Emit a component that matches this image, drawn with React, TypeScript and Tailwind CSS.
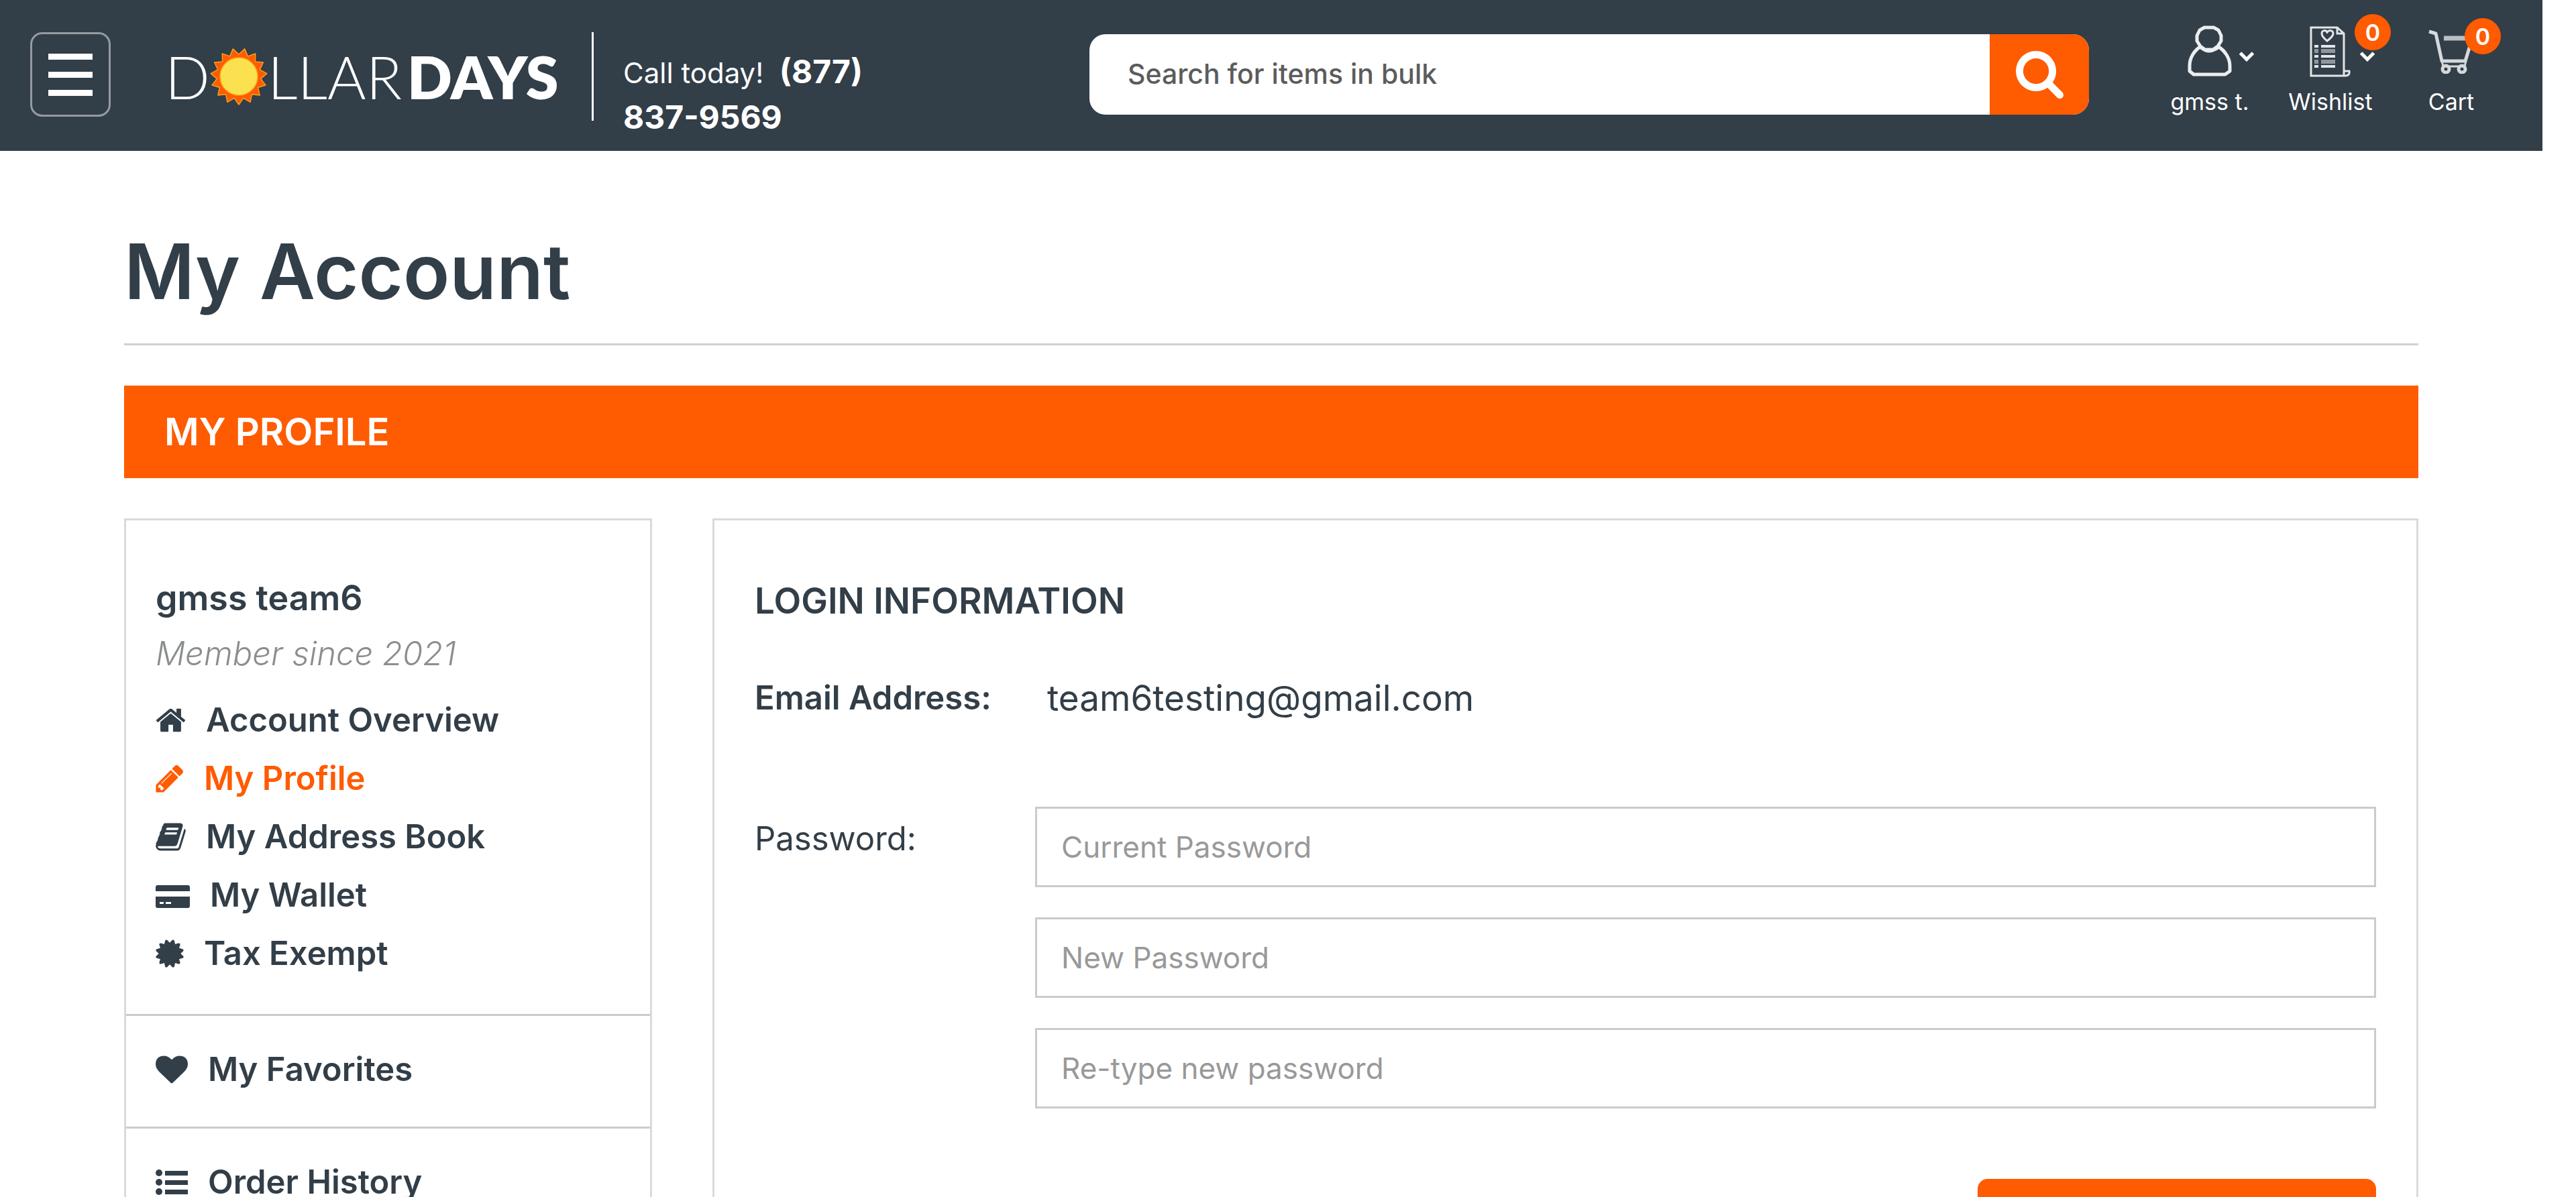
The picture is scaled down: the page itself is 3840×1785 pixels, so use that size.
import type { ReactNode } from "react";

const HOME =
  "M1408 992v480q0 26-19 45t-45 19h-384v-384h-256v384h-384q-26 0-45-19t-19-45v-480q0-1 .5-3t.5-3l575-474 575 474q1 2 1 6zm223-69l-62 74q-8 9-21 11h-3q-13 0-21-7l-692-577-692 577q-12 8-24 7-13-2-21-11l-62-74q-8-10-7-23.5t11-21.5l719-599q32-26 76-26t76 26l244 204v-195q0-14 9-23t23-9h192q14 0 23 9t9 23v408l219 182q10 8 11 21.5t-7 23.5z";
const PENCIL =
  "M491 1536l91-91-235-235-91 91v107h128v128h107zm523-928q0-22-22-22-10 0-17 7l-542 542q-7 7-7 17 0 22 22 22 10 0 17-7l542-542q7-7 7-17zm-54-192l416 416-832 832h-416v-416zm683 96q0 53-37 90l-166 166-416-416 166-165q36-38 90-38 53 0 91 38l235 234q37 39 37 91z";
const BOOK =
  "M1703 478q40 57 18 129l-275 906q-19 64-76.5 107.5t-122.5 43.5h-923q-77 0-148.5-53.5t-99.5-131.5q-24-67-2-127 0-4 3-27t4-37q1-8-3-21.5t-3-19.5q2-11 8-21t16.5-23.5 16.5-23.5q23-38 45-91.5t30-91.5q3-10 .5-30t-.5-28q3-11 17-28t17-23q21-36 42-92t25-90q1-9-2.5-32t.5-28q4-13 22-30.5t22-22.5q19-26 42.5-84.5t27.5-96.5q1-8-3-25.5t-2-26.5q2-8 9-18t18-23 17-21q8-12 16.5-30.5t15-35 16-36 19.5-32 26.5-23.5 36-11.5 47.5 5.5l-1 3q38-9 51-9h761q74 0 114 56t18 130l-274 906q-36 119-71.5 153.5t-128.5 34.5h-869q-27 0-38 15-11 16-1 43 24 70 144 70h923q29 0 56-15.5t35-41.5l300-987q7-22 5-57 38 15 59 43zm-1064 2q-4 13 2 22.5t20 9.5h608q13 0 25.5-9.5t16.5-22.5l21-64q4-13-2-22.5t-20-9.5h-608q-13 0-25.5 9.5t-16.5 22.5zm-83 256q-4 13 2 22.5t20 9.5h608q13 0 25.5-9.5t16.5-22.5l21-64q4-13-2-22.5t-20-9.5h-608q-13 0-25.5 9.5t-16.5 22.5z";
const SEAL =
  "M1504 896l138 135q30 28 20 70-12 41-52 51l-188 48 53 186q12 41-19 70-29 31-70 19l-186-53-48 188q-10 40-51 52-12 2-19 2-31 0-51-22l-135-138-135 138q-28 30-70 20-41-11-51-52l-48-188-186 53q-41 12-70-19-31-29-19-70l53-186-188-48q-40-10-52-51-10-42 20-70l138-135-138-135q-30-28-20-70 12-41 52-51l188-48-53-186q-12-41 19-70 29-31 70-19l186 53 48-188q10-41 51-51 41-12 70 19l135 139 135-139q29-30 70-19 41 10 51 51l48 188 186-53q41-12 70 19 31 29 19 70l-53 186 188 48q40 10 52 51 10 42-20 70z";
const HEART =
  "M896 1664q-26 0-44-18l-624-602q-10-8-27.5-26t-55.5-65.5-68-97.5-53.5-121-23.5-138q0-220 127-344t351-124q62 0 126.5 21.5t120 58 95.5 68.5 76 68q36-36 76-68t95.5-68.5 120-58 126.5-21.5q224 0 351 124t127 344q0 221-229 450l-623 600q-18 18-44 18z";
const SEARCH =
  "M1216 832q0-185-131.5-316.5t-316.5-131.5-316.5 131.5-131.5 316.5 131.5 316.5 316.5 131.5 316.5-131.5 131.5-316.5zm512 832q0 52-38 90t-90 38q-54 0-90-38l-343-342q-179 124-399 124-143 0-273.5-55.5t-225-150-150-225-55.5-273.5 55.5-273.5 150-225 225-150 273.5-55.5 273.5 55.5 225 150 150 225 55.5 273.5q0 220-124 399l343 343q37 37 37 90z";

const SUN_POINTS = Array.from({ length: 30 }, (_, i) => {
  const radius = i % 2 === 0 ? 42 : 33;
  const angle = Math.PI / 2 + (i * Math.PI) / 15;
  return `${(43 + radius * Math.cos(angle)).toFixed(1)},${(43 + radius * Math.sin(angle)).toFixed(1)}`;
}).join(" ");

function SunIcon() {
  return (
    <svg viewBox="0 0 86 86" className="size-[86px]" aria-hidden="true">
      <polygon points={SUN_POINTS} fill="#ff5b00" stroke="#f0a020" strokeWidth="1.5" strokeLinejoin="round" />
      <circle cx="43" cy="43" r="28" fill="#fbe150" stroke="#fba91c" strokeWidth="1.5" />
    </svg>
  );
}

function Chevron() {
  return (
    <svg viewBox="0 0 24 16" className="absolute top-[76px] left-[133px] h-4 w-6" fill="none" stroke="#fff" strokeWidth="5" aria-hidden="true">
      <path d="M2.5 3 12 12.5 21.5 3" />
    </svg>
  );
}

function PersonIcon() {
  return (
    <svg viewBox="0 0 66 76" className="h-[76px] w-[66px]" fill="none" stroke="#eceeef" strokeWidth="5" aria-hidden="true">
      <path d="M25 3h14l7 4 4 8v8l-5 8-7 5H26l-7-5-5-8v-8l4-8z" strokeLinejoin="round" />
      <path d="M20 31C10 37 3 48 3 60v8l6 5h47l7-5v-8c0-12-8-23-18-29M20 33c4 3 8 5 12 5s9-2 13-5" strokeLinejoin="round" />
    </svg>
  );
}

function WishlistIcon() {
  return (
    <svg viewBox="0 0 62 78" className="h-[78px] w-[62px]" fill="none" stroke="#e3e5e7" strokeWidth="4" aria-hidden="true">
      <path d="M2 3h39l10 9v63H2zM41 3v9h10M51 68h8c1 4-1 7-6 7h-6" strokeWidth="3" />
      <path d="M26 23c-5-4-8-7-8-11 0-5 6-6 8-2 3-4 9-3 9 2 0 4-4 7-9 11z" strokeWidth="3" />
      <path d="M17 31h21M17 46h21M17 61h21M7 31h6M7 46h6M7 61h6" />
      <path d="M17 38h21M17 54h21M7 38h6M7 54h6" stroke="#8f979d" strokeWidth="6" />
    </svg>
  );
}

function CartIcon() {
  return (
    <svg viewBox="0 0 70 66" className="mt-1.5 h-[66px] w-[70px]" fill="none" stroke="#d5d9db" strokeWidth="5" strokeLinejoin="round" aria-hidden="true">
      <path d="M2 3l10 3 9 41h35l11-36" />
      <path d="M24 13h40" strokeWidth="7" stroke="#b9bfc3" />
      <path d="M21 47l2 8h32l2-8" strokeWidth="3" />
      <circle cx="27" cy="59" r="5" />
      <circle cx="51" cy="59" r="5" />
    </svg>
  );
}

function Badge({ children }: { children: ReactNode }) {
  return (
    <span className="flex size-[54px] items-center justify-center rounded-full bg-[#ff5b00] text-[34px] font-semibold">
      {children}
    </span>
  );
}

function HeaderItem({ label, children }: { label: string; children: ReactNode }) {
  return (
    <a href="#" className="relative flex w-[180px] flex-col items-center pt-[38px] text-white">
      <span className="flex h-[88px] items-start">{children}</span>
      <span className="text-[34px] leading-[52px]">{label}</span>
    </a>
  );
}

function Header() {
  return (
    <header className="flex h-[225px] items-start bg-[#323e48] pr-[46px] text-white">
      <button
        type="button"
        aria-label="Open menu"
        className="mt-12 ml-[45px] flex h-[126px] w-[120px] shrink-0 flex-col items-center justify-center gap-[18px] rounded-[18px] border-[3px] border-[#969ba1]"
      >
        <span className="h-[9px] w-[66px] bg-white" />
        <span className="h-[9px] w-[66px] bg-white" />
        <span className="h-[9px] w-[66px] bg-white" />
      </button>
      <a
        href="#"
        aria-label="DollarDays"
        className="mt-[71px] ml-[81px] flex w-[636px] shrink-0 items-center font-['Lato',sans-serif] text-[88px] leading-[86px] whitespace-nowrap"
      >
        <span className="font-light">D</span>
        <SunIcon />
        <span className="font-light">LLAR</span>
        <span className="ml-2 font-extrabold">DAYS</span>
      </a>
      <p className="mt-12 flex h-[132px] w-[692px] shrink-0 border-l-[3px] border-white pt-[26px] pl-11">
        <span className="w-[450px] text-[48px] leading-[66px]">
          <span className="text-[42px]">Call today!</span>{" "}
          <a href="tel:8778379569" className="ml-2.5 font-bold">
            (877) 837-9569
          </a>
        </span>
      </p>
      <form className="mt-[51px] mr-[90px] ml-[50px] flex h-[120px] min-w-0 flex-1 overflow-hidden rounded-[24px] bg-white">
        <input
          type="search"
          aria-label="Search for items in bulk"
          placeholder="Search for items in bulk"
          className="min-w-0 flex-1 pl-[57px] text-[41px] font-medium text-[#5c5c5c] outline-none placeholder:text-[#5c5c5c]"
        />
        <button type="button" aria-label="Search" className="flex w-[148px] items-center justify-center bg-[#ff5b00]">
          <svg viewBox="64 128 1664 1664" className="size-[71px]" fill="#fff" aria-hidden="true">
            <path d={SEARCH} />
          </svg>
        </button>
      </form>
      <nav aria-label="Account" className="flex shrink-0">
        <HeaderItem label="gmss t.">
          <PersonIcon />
          <Chevron />
        </HeaderItem>
        <HeaderItem label="Wishlist">
          <WishlistIcon />
          <Chevron />
          <span className="absolute top-[21px] left-[126px]">
            <Badge>0</Badge>
          </span>
        </HeaderItem>
        <HeaderItem label="Cart">
          <CartIcon />
          <span className="absolute top-[27px] left-[110px]">
            <Badge>0</Badge>
          </span>
        </HeaderItem>
      </nav>
    </header>
  );
}

/* Glyphs drawn on a 1792-unit grid, shown at 48px per em. */
function HomeIcon() {
  return (
    <svg viewBox="64 0 1664 1792" className="h-12 w-[45px]" fill="currentColor" aria-hidden="true">
      <path d={HOME} transform="translate(64 0)" />
    </svg>
  );
}
function PencilIcon() {
  return (
    <svg viewBox="128 0 1536 1792" className="h-12 w-[42px]" fill="currentColor" aria-hidden="true">
      <path d={PENCIL} />
    </svg>
  );
}
function BookIcon() {
  return (
    <svg viewBox="64 0 1664 1792" className="h-12 w-[45px]" fill="currentColor" aria-hidden="true">
      <path d={BOOK} />
    </svg>
  );
}
function CardIcon() {
  return (
    <svg viewBox="0 0 51 48" className="h-12 w-[51px]" fill="currentColor" aria-hidden="true">
      <path d="M3 9h45a3 3 0 0 1 3 3v6H0v-6a3 3 0 0 1 3-3z" />
      <path fillRule="evenodd" d="M0 26h51v14a3 3 0 0 1-3 3H3a3 3 0 0 1-3-3zm6 8v3h6v-3zm9 0v3h8v-3z" />
    </svg>
  );
}
function SealIcon() {
  return (
    <svg viewBox="128 0 1536 1792" className="h-12 w-[42px]" fill="currentColor" aria-hidden="true">
      <path d={SEAL} />
    </svg>
  );
}
function HeartIcon() {
  return (
    <svg viewBox="0 0 1792 1792" className="size-12" fill="currentColor" aria-hidden="true">
      <path d={HEART} />
    </svg>
  );
}
function ListIcon() {
  return (
    <svg viewBox="0 0 48 48" className="size-12" fill="currentColor" aria-hidden="true">
      <circle cx="5" cy="10" r="5" />
      <circle cx="5" cy="24" r="5" />
      <circle cx="5" cy="38" r="5" />
      <path d="M14 7h34v7H14zM14 21h34v7H14zM14 35h34v7H14z" />
    </svg>
  );
}

function NavLink({ icon, label, active = false }: { icon: ReactNode; label: string; active?: boolean }) {
  return (
    <a
      href="#"
      aria-current={active ? "page" : undefined}
      className={
        active
          ? "flex items-center gap-[30px] text-[49px] leading-[87px] font-semibold text-[#ff5b00]"
          : "flex items-center gap-[30px] text-[49px] leading-[87px] font-semibold"
      }
    >
      {icon}
      {label}
    </a>
  );
}

function Sidebar() {
  return (
    <aside className="w-[787px] shrink-0 border-[3px] border-[#dadada]">
      <div className="px-11 pt-[74px] pb-[47px]">
        <h3 className="text-[52px] leading-[84px] font-semibold">gmss team6</h3>
        <p className="text-[49px] leading-[82px] font-light text-[#8a8e90] italic">Member since 2021</p>
        <nav aria-label="My account" className="mt-3.5">
          <NavLink icon={<HomeIcon />} label="Account Overview" />
          <NavLink icon={<PencilIcon />} label="My Profile" active />
          <NavLink icon={<BookIcon />} label="My Address Book" />
          <NavLink icon={<CardIcon />} label="My Wallet" />
          <NavLink icon={<SealIcon />} label="Tax Exempt" />
        </nav>
      </div>
      <div className="border-t-[3px] border-[#cbcbcb] px-11 pt-9 pb-[42px]">
        <NavLink icon={<HeartIcon />} label="My Favorites" />
      </div>
      <div className="border-t-[3px] border-[#cbcbcb] px-11 pt-9 pb-[42px]">
        <NavLink icon={<ListIcon />} label="Order History" />
      </div>
    </aside>
  );
}

function PasswordField({ id, label }: { id: string; label: string }) {
  return (
    <input
      id={id}
      type="password"
      aria-label={label}
      placeholder={label}
      className="h-[120px] w-full border-[3px] border-[#cbcbcb] bg-white px-9 text-[44px] outline-none placeholder:text-[#999]"
    />
  );
}

function LoginPanel() {
  return (
    <section className="min-w-0 flex-1 border-[3px] border-[#dadada] px-[60px] pt-20">
      <h3 className="text-[53px] leading-[80px] font-semibold">LOGIN INFORMATION</h3>
      <dl className="mt-[69px] flex leading-[72px]">
        <dt className="w-[436px] shrink-0 text-[49px] font-semibold">Email Address:</dt>
        <dd className="text-[53px]">team6testing@gmail.com</dd>
      </dl>
      <form className="mt-[126px]">
        <div className="flex items-start">
          <label htmlFor="current-password" className="mt-3 w-[418px] shrink-0 text-[49px] leading-[72px]">
            Password:
          </label>
          <div className="flex min-w-0 flex-1 flex-col gap-[45px]">
            <PasswordField id="current-password" label="Current Password" />
            <PasswordField id="new-password" label="New Password" />
            <PasswordField id="retype-password" label="Re-type new password" />
          </div>
        </div>
        <div className="mt-[105px] flex justify-end">
          <button type="button" aria-label="Save" className="h-[138px] w-[594px] rounded-[15px] bg-[#ff5b00]" />
        </div>
      </form>
    </section>
  );
}

export default function App() {
  return (
    <div className="h-screen overflow-hidden bg-white pr-[50px] font-['Inter','Liberation_Sans',sans-serif] text-[#323e48]">
      <Header />
      <main className="px-[185px] pt-24">
        <h1 className="border-b-[3px] border-[#d1d1d1] pb-[23px] text-[114px] leading-[168px] font-semibold">My Account</h1>
        <h2 className="mt-[60px] bg-[#ff5b00] pl-[60px] text-[56px] leading-[138px] font-semibold text-white">MY PROFILE</h2>
        <div className="mt-[60px] flex gap-[90px]">
          <Sidebar />
          <LoginPanel />
        </div>
      </main>
    </div>
  );
}
